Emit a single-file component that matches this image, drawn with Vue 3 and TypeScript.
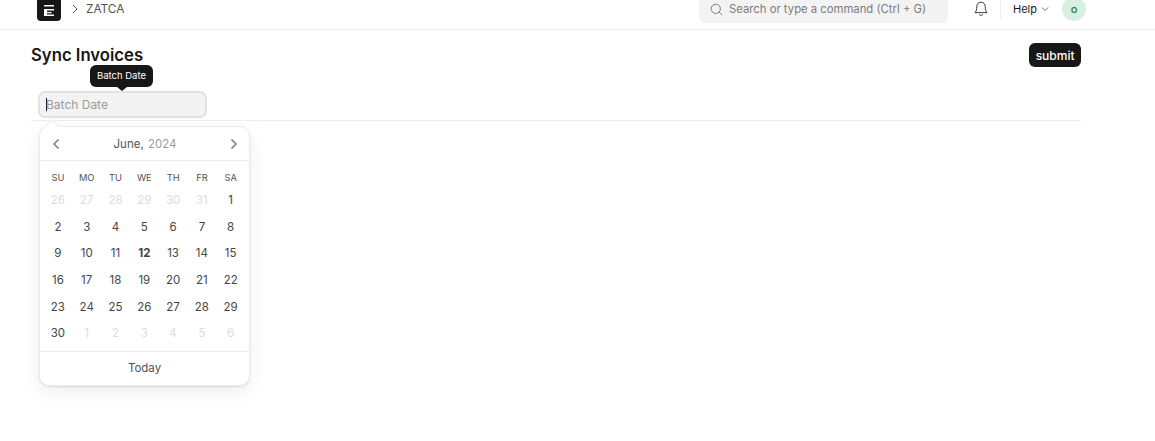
<template>
  <div class="page">
    <header class="navbar">
      <div class="logo">
        <svg width="14" height="14" viewBox="0 0 14 14" fill="none">
          <path d="M2 3h10v1.600H2zM2 7h10v1.500H5v1.500h4.500v1.200H5v1.300h7v1.500H2z" fill="#fff" />
        </svg>
      </div>
      <svg class="crumb-arrow" width="8" height="10" viewBox="0 0 8 10" fill="none">
        <path d="M2 1l4 4-4 4" stroke="#525252" stroke-width="1" />
      </svg>
      <span class="crumb">ZATCA</span>
      <div class="search">
        <svg width="13" height="13" viewBox="0 0 13 13" fill="none">
          <circle cx="5.800" cy="5.800" r="4.600" stroke="#7c7c7c" stroke-width="1" />
          <path d="M9.200 9.200l3 3" stroke="#7c7c7c" stroke-width="1" />
        </svg>
        <span>Search or type a command (Ctrl + G)</span>
      </div>
      <svg class="bell" width="14" height="16" viewBox="0 0 14 16" fill="none">
        <path d="M7 1.200c-2.600 0-4.200 2-4.200 4.400 0 3-.6 4.500-1.800 6h12c-1.200-1.500-1.800-3-1.800-6C11.200 3.200 9.600 1.200 7 1.200z" stroke="#3a3a3a" stroke-width="1" stroke-linejoin="round" />
        <path d="M5.500 13.800c.8.900 2.200.9 3 0" stroke="#3a3a3a" stroke-width="1" stroke-linecap="round" />
      </svg>
      <div class="sep"></div>
      <span class="help">Help</span>
      <svg class="caret" width="8" height="6" viewBox="0 0 8 6" fill="none">
        <path d="M1 1.500l3 3 3-3" stroke="#6b6b6b" stroke-width="1" />
      </svg>
      <div class="avatar">o</div>
    </header>

    <main class="content">
      <div class="head">
        <h1>Sync Invoices</h1>
        <button class="submit">submit</button>
      </div>
      <div class="field">
        <div class="input"><i class="cursor"></i><span>Batch Date</span></div>
      </div>
      <div class="rule"></div>
    </main>

    <div class="tooltip">Batch Date</div>

    <div class="picker">
      <div class="picker-nav">
        <svg width="8" height="12" viewBox="0 0 8 12" fill="none">
          <path d="M6.500 1.500L2 6l4.500 4.500" stroke="#7c7c7c" stroke-width="1.500" />
        </svg>
        <div class="month">June, <span>2024</span></div>
        <svg width="8" height="12" viewBox="0 0 8 12" fill="none">
          <path d="M1.500 1.500L6 6l-4.500 4.500" stroke="#7c7c7c" stroke-width="1.500" />
        </svg>
      </div>
      <div class="cal">
        <div class="days">
          <span v-for="d in dayNames" :key="d">{{ d }}</span>
        </div>
        <div v-for="(week, i) in weeks" :key="i" class="week">
          <span
            v-for="c in week"
            :key="c.n + '-' + c.muted"
            :class="{ muted: c.muted, today: !c.muted && c.n === 12 }"
          >{{ c.n }}</span>
        </div>
      </div>
      <div class="today-row">Today</div>
    </div>
  </div>
</template>

<script setup lang="ts">
const dayNames = ["SU", "MO", "TU", "WE", "TH", "FR", "SA"];

interface Cell {
  n: number;
  muted: boolean;
}

const cells: Cell[] = [];
for (let n = 26; n <= 31; n++) cells.push({ n, muted: true });
for (let n = 1; n <= 30; n++) cells.push({ n, muted: false });
for (let n = 1; n <= 6; n++) cells.push({ n, muted: true });

const weeks: Cell[][] = [];
for (let i = 0; i < cells.length; i += 7) weeks.push(cells.slice(i, i + 7));
</script>

<style>
html,
body {
  margin: 0;
  background: #fff;
  overflow: hidden;
}
</style>

<style scoped>
.page {
  position: relative;
  width: 1155px;
  height: 441px;
  overflow: hidden;
  font-family: Inter, "Liberation Sans", sans-serif;
  color: #171717;
}
.navbar {
  display: flex;
  align-items: center;
  height: 40px;
  margin-top: -11px;
  padding-left: 37px;
  border-bottom: 1px solid #ededed;
}
.logo {
  flex: none;
  width: 24px;
  height: 24px;
  border-radius: 4px;
  background: #171717;
  display: flex;
  align-items: center;
  justify-content: center;
}
.crumb-arrow {
  margin-left: 10px;
}
.crumb {
  margin-left: 7px;
  font-size: 11.800px;
  color: #525252;
}
.search {
  display: flex;
  align-items: center;
  gap: 6px;
  width: 249px;
  height: 28px;
  margin-left: auto;
  padding-left: 11px;
  box-sizing: border-box;
  border-radius: 6px;
  background: #f3f3f3;
  font-size: 11.300px;
  color: #7c7c7c;
}
.bell {
  margin-left: 26px;
}
.sep {
  width: 1px;
  height: 20px;
  margin-left: 12px;
  background: #ededed;
}
.help {
  margin-left: 12px;
  width: 24px;
  font-size: 11px;
  color: #171717;
}
.caret {
  margin-left: 4px;
}
.avatar {
  flex: none;
  width: 24px;
  height: 24px;
  margin-left: 13px;
  margin-right: 69px;
  border-radius: 50%;
  background: #d8f0e0;
  color: #1a7a4c;
  font-size: 11px;
  font-weight: 500;
  display: flex;
  align-items: center;
  justify-content: center;
}
.content {
  width: 1050px;
  margin-left: 31px;
}
.head {
  display: flex;
  align-items: flex-start;
  justify-content: space-between;
  padding-top: 13px;
}
h1 {
  margin: 2px 0 0;
  font-size: 16.700px;
  font-weight: 600;
  line-height: 21px;
}
.submit {
  height: 24px;
  padding: 0 6.500px;
  border: none;
  border-radius: 6px;
  background: #171717;
  color: #fff;
  font: 500 12px Inter, "Liberation Sans", sans-serif;
}
.field {
  padding: 24px 0 2px 7px;
}
.input {
  display: flex;
  align-items: center;
  width: 169px;
  height: 27px;
  box-sizing: border-box;
  padding-left: 6px;
  border: 2px solid #e2e2e2;
  border-radius: 7px;
  background: #f3f3f3;
  font-size: 12px;
  color: #9c9c9c;
}
.cursor {
  width: 1px;
  height: 13px;
  margin-right: -1px;
  background: #171717;
}
.rule {
  height: 1px;
  background: #ededed;
}
.tooltip {
  position: absolute;
  left: 90px;
  top: 65px;
  width: 63px;
  height: 22px;
  border-radius: 6px;
  background: #171717;
  color: #fff;
  font-size: 9.500px;
  line-height: 22px;
  text-align: center;
}
.tooltip::after {
  content: "";
  position: absolute;
  left: 27px;
  top: 22px;
  border: 5px solid transparent;
  border-top: 4px solid #171717;
  border-bottom: none;
}
.picker {
  position: absolute;
  left: 39px;
  top: 126px;
  width: 211px;
  height: 260px;
  box-sizing: border-box;
  border: 1px solid #ececec;
  border-radius: 10px;
  background: #fff;
  box-shadow: 0 1px 2px rgba(0, 0, 0, 0.1), 0 6px 20px rgba(0, 0, 0, 0.07);
}
.picker::before {
  content: "";
  position: absolute;
  left: 7px;
  top: -6px;
  width: 9px;
  height: 9px;
  background: #fff;
  border-left: 1px solid #ececec;
  border-top: 1px solid #ececec;
  transform: rotate(45deg);
}
.picker-nav {
  display: flex;
  align-items: center;
  justify-content: space-between;
  height: 33px;
  padding: 0 11px 0 12px;
  border-bottom: 1px solid #ededed;
}
.month {
  font-size: 11.500px;
  color: #525252;
}
.month span {
  margin-left: 1px;
  color: #9c9c9c;
}
.cal {
  padding: 9px 3.500px 0;
}
.days,
.week {
  display: grid;
  grid-template-columns: repeat(7, 28.800px);
  justify-items: center;
  align-items: center;
}
.days {
  height: 14px;
  margin-bottom: 3px;
  font-size: 9.300px;
  color: #525252;
}
.week {
  height: 26.600px;
  font-size: 11.500px;
  color: #454545;
}
.muted {
  color: #dcdcdc;
}
.today {
  font-weight: 700;
}
.today-row {
  position: absolute;
  left: 0;
  right: 0;
  bottom: 0;
  height: 33px;
  border-top: 1px solid #ededed;
  font-size: 11.500px;
  line-height: 33px;
  text-align: center;
  color: #525252;
}
</style>
